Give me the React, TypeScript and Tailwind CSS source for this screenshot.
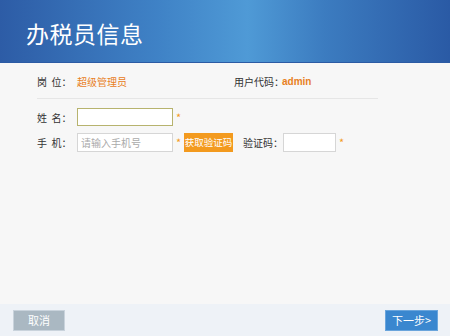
import React from 'react';

const font = { fontFamily: '"Noto Sans CJK SC", "Liberation Sans", sans-serif' };

const Star = () => <span className="ml-[3px] w-[7px] text-[11px] leading-none text-[#f39a1e]">*</span>;

const App: React.FC = () => {
  return (
    <div className="flex h-[336px] w-[450px] flex-col overflow-hidden bg-[#f7f7f7]" style={font}>
      {/* ===== header ===== */}
      <header className="flex h-[63px] items-center border-b border-[#2c5ba4] bg-[linear-gradient(90deg,#2d5ca6_0%,#3f82c6_35%,#4f9ad6_55%,#3c7cc0_72%,#2a5aa5_100%)] pl-[26px]">
        <h1 className="pt-[5px] text-[23px] leading-none tracking-[0.5px] text-white">办税员信息</h1>
      </header>

      {/* ===== body ===== */}
      <main className="flex-1 px-[37px] pt-[13px]">
        <div className="flex w-[341px] items-center whitespace-nowrap border-b border-[#e6e6e6] pb-[10px] text-[10px] leading-[12px]">
          <div className="flex w-[197px] items-center">
            <span className="w-[40px] text-[#333]">岗&nbsp;&nbsp;位：</span>
            <span className="text-[#e8801e]">超级管理员</span>
          </div>
          <span className="w-[48px] text-[#333]">用户代码：</span>
          <span className="text-[10px] font-bold text-[#e8801e]" style={{ fontFamily: '"Liberation Sans", sans-serif' }}>
            admin
          </span>
        </div>

        <div className="mt-[9px] flex h-[18px] items-center whitespace-nowrap text-[10px] text-[#333]">
          <span className="w-[40px]">姓&nbsp;&nbsp;名：</span>
          <input className="h-[18px] w-[96px] border border-[#b7b36e] bg-white outline-none" />
          <Star />
        </div>

        <div className="mt-[7px] flex h-[19px] items-center whitespace-nowrap text-[10px] text-[#333]">
          <span className="w-[40px]">手&nbsp;&nbsp;机：</span>
          <input
            placeholder="请输入手机号"
            className="h-[19px] w-[96px] border border-[#d6d6d6] bg-white px-[3px] text-[10px] outline-none placeholder:text-[#aaa]"
          />
          <Star />
          <button className="ml-[1px] h-[19px] w-[49px] whitespace-nowrap bg-[#f39a1e] p-0 text-[9.5px] text-white">
            获取验证码
          </button>
          <span className="ml-[10px] w-[40px]">验证码：</span>
          <input className="h-[19px] w-[53px] border border-[#d6d6d6] bg-white outline-none" />
          <Star />
        </div>
      </main>

      {/* ===== footer ===== */}
      <footer className="flex h-[32px] items-center justify-between bg-[#eef2f7] pl-[13px] pr-[12px]">
        <button className="h-[21px] w-[52px] border border-[#c9d3dc] bg-[#aab8c2] text-[11px] text-white">取消</button>
        <button className="h-[21px] w-[53px] border border-[#6aa5dc] bg-[#3a87cf] text-[11px] text-white">下一步&gt;</button>
      </footer>
    </div>
  );
};

export default App;
